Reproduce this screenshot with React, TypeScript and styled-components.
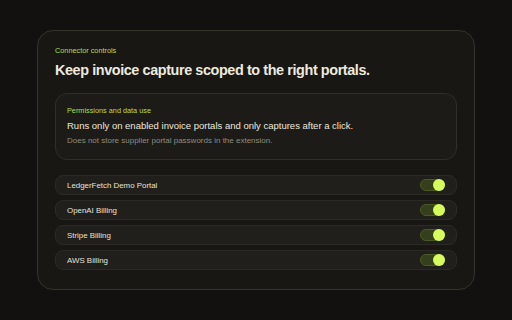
import React from 'react';
import styled, { createGlobalStyle } from 'styled-components';

const GlobalStyle = createGlobalStyle`
  html, body {
    margin: 0;
    padding: 0;
    background: #121110;
  }
  body {
    font-family: 'Liberation Sans', Arial, sans-serif;
  }
`;

const portals = ['LedgerFetch Demo Portal', 'OpenAI Billing', 'Stripe Billing', 'AWS Billing'];

const App: React.FC = () => {
  return (
    <>
      <GlobalStyle />
      <Page>
        <Card>
          <Eyebrow>Connector controls</Eyebrow>
          <Title>Keep invoice capture scoped to the right portals.</Title>
          <InfoBox>
            <Eyebrow>Permissions and data use</Eyebrow>
            <InfoMain>Runs only on enabled invoice portals and only captures after a click.</InfoMain>
            <InfoSub>Does not store supplier portal passwords in the extension.</InfoSub>
          </InfoBox>
          <List>
            {portals.map((name) => (
              <Row key={name}>
                <RowLabel>{name}</RowLabel>
                <Toggle $on />
              </Row>
            ))}
          </List>
        </Card>
      </Page>
    </>
  );
};

export default App;

const Page = styled.div`
  width: 512px;
  height: 320px;
  display: flex;
  align-items: center;
  justify-content: center;
`;

const Card = styled.section`
  box-sizing: border-box;
  width: 438px;
  height: 260px;
  padding: 15px 17px 0;
  border: 1px solid #35332c;
  border-radius: 16px;
  background: #181713;
  display: flex;
  flex-direction: column;
`;

const Eyebrow = styled.div`
  font-size: 7.3px;
  line-height: 10px;
  color: #b8dc4c;
`;

const Title = styled.h1`
  margin: 5px 0 0;
  font-size: 14.4px;
  line-height: 18px;
  font-weight: 700;
  letter-spacing: -0.4px;
  color: #ede9de;
`;

const InfoBox = styled.div`
  margin-top: 14px;
  padding: 12px 11px 13px;
  border: 1px solid #2f2e28;
  border-radius: 12px;
  background: #1c1b17;
`;

const InfoMain = styled.div`
  margin-top: 3px;
  font-size: 9.5px;
  line-height: 14px;
  color: #ece8dc;
`;

const InfoSub = styled.div`
  margin-top: 2px;
  font-size: 8px;
  line-height: 11px;
  color: #908c7f;
`;

const List = styled.div`
  margin-top: 15px;
  display: flex;
  flex-direction: column;
  gap: 5px;
`;

const Row = styled.div`
  box-sizing: border-box;
  height: 20px;
  padding: 0 11px;
  border: 1px solid #2b2a24;
  border-radius: 8px;
  background: #201f1b;
  display: flex;
  align-items: center;
  justify-content: space-between;
`;

const RowLabel = styled.span`
  font-size: 7.9px;
  color: #e6e2d6;
`;

const Toggle = styled.span<{ $on?: boolean }>`
  position: relative;
  box-sizing: border-box;
  width: 25px;
  height: 12px;
  border-radius: 6px;
  border: 1px solid ${({ $on }) => ($on ? '#4a5a22' : '#3a3830')};
  background: ${({ $on }) => ($on ? '#363f1c' : '#2a2924')};

  &::after {
    content: '';
    position: absolute;
    top: 50%;
    left: ${({ $on }) => ($on ? '12px' : '0')};
    width: 12px;
    height: 12px;
    margin-top: -6px;
    border-radius: 50%;
    background: #d7fb5c;
  }
`;
